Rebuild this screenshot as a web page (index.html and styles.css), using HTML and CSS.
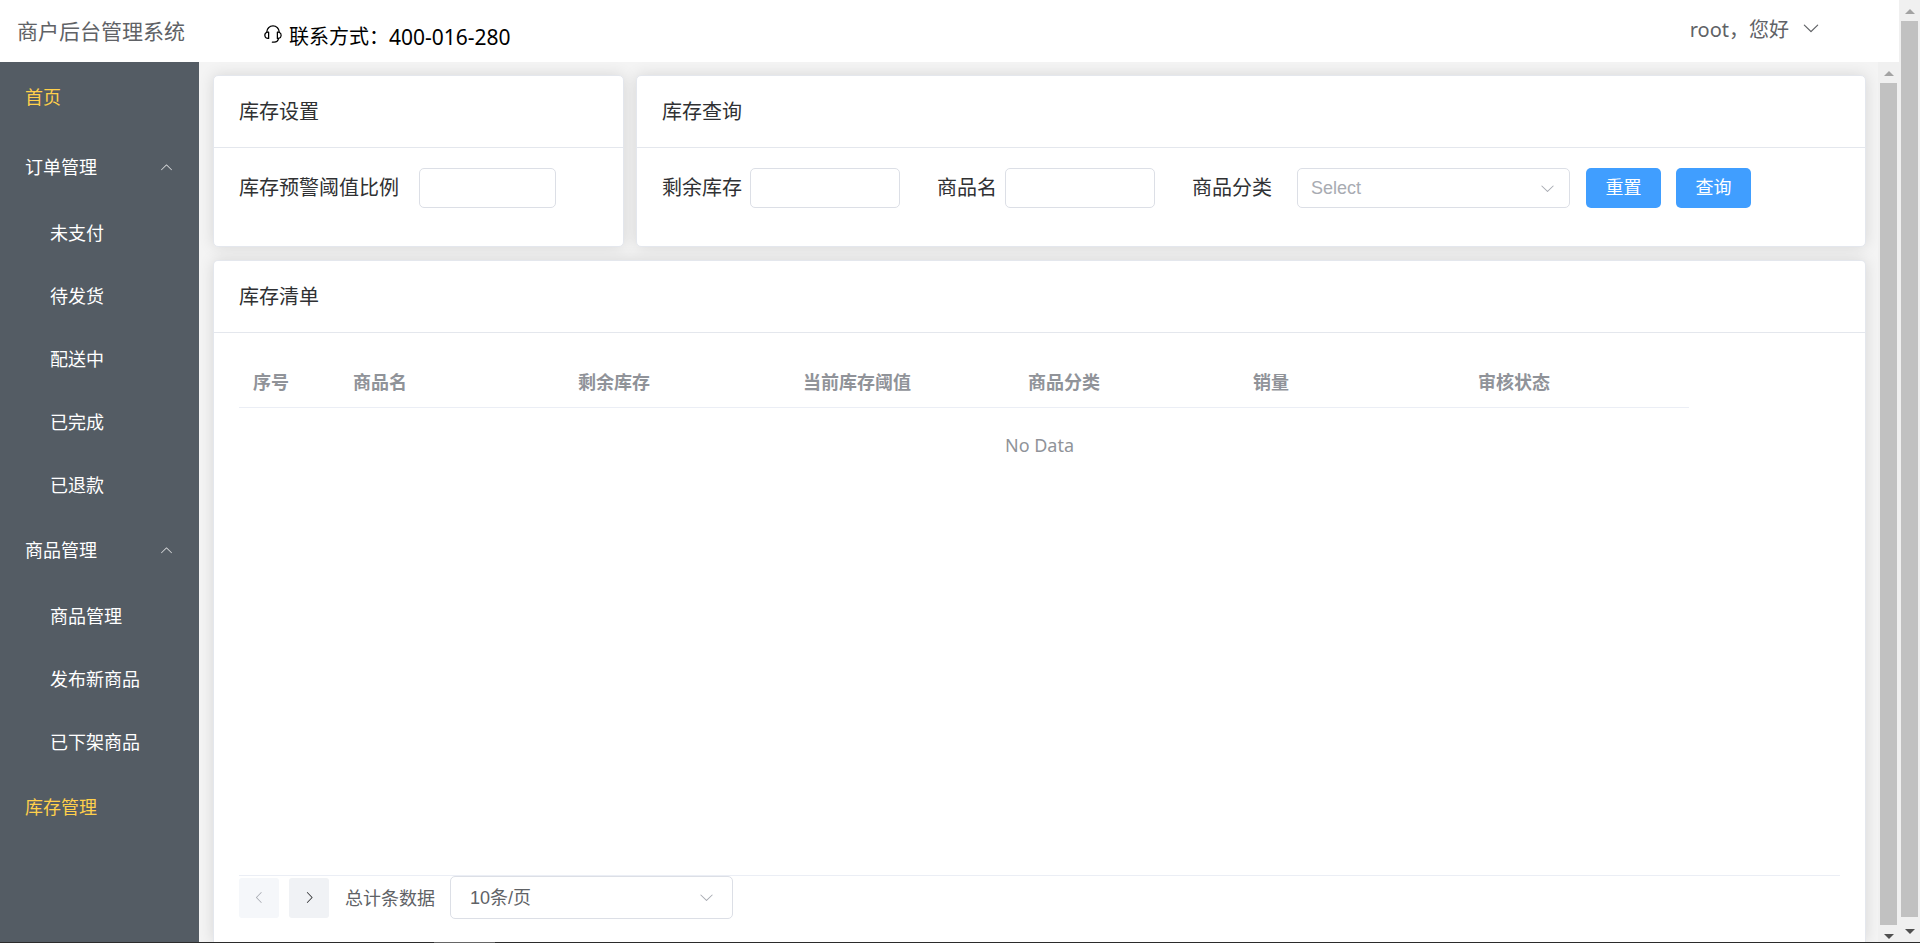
FILE: index.html
```html
<!DOCTYPE html>
<html lang="zh-CN">
<head>
<meta charset="utf-8">
<title>商户后台管理系统</title>
<link rel="stylesheet" href="styles.css">
</head>
<body>
<svg class="sprite" aria-hidden="true">
  <symbol id="arrow-down" viewBox="0 0 1024 1024"><path d="M831.872 340.864 512 652.672 192.128 340.864a30.592 30.592 0 0 0-42.752 0 29.12 29.12 0 0 0 0 41.6L489.664 714.24a32 32 0 0 0 44.672 0l340.288-331.712a29.12 29.12 0 0 0 0-41.728 30.592 30.592 0 0 0-42.752 0z"/></symbol>
  <symbol id="arrow-up" viewBox="0 0 1024 1024"><path d="M831.872 683.136 512 371.328 192.128 683.136a30.592 30.592 0 0 1-42.752 0 29.12 29.12 0 0 1 0-41.6L489.664 309.76a32 32 0 0 1 44.672 0l340.288 331.712a29.12 29.12 0 0 1 0 41.728 30.592 30.592 0 0 1-42.752 0z"/></symbol>
  <symbol id="arrow-left" viewBox="0 0 1024 1024"><path d="M609.408 149.376 277.76 489.6a32 32 0 0 0 0 44.672l331.648 340.352a29.12 29.12 0 0 0 41.728 0 30.592 30.592 0 0 0 0-42.752L339.264 511.936l311.872-319.872a30.592 30.592 0 0 0 0-42.688 29.12 29.12 0 0 0-41.728 0z"/></symbol>
  <symbol id="arrow-right" viewBox="0 0 1024 1024"><path d="M340.864 149.312a30.592 30.592 0 0 0 0 42.752L652.736 512 340.864 831.872a30.592 30.592 0 0 0 0 42.752 29.12 29.12 0 0 0 41.728 0L714.24 534.336a32 32 0 0 0 0-44.672L382.592 149.376a29.12 29.12 0 0 0-41.728 0z"/></symbol>
  <symbol id="service" viewBox="0 0 1024 1024"><path d="M864 409.6a192 192 0 0 1-37.888 349.44A256.064 256.064 0 0 1 576 960h-96a32 32 0 1 1 0-64h96a192.064 192.064 0 0 0 181.12-128H736a32 32 0 0 1-32-32V416a32 32 0 0 1 32-32h32c10.368 0 20.544.832 30.528 2.432a288 288 0 0 0-573.056 0A193.235 193.235 0 0 1 256 384h32a32 32 0 0 1 32 32v320a32 32 0 0 1-32 32h-32a192 192 0 0 1-96-358.4 352 352 0 0 1 704 0zM256 448a128 128 0 1 0 0 256V448zm640 128a128 128 0 0 0-128-128v256a128 128 0 0 0 128-128z"/></symbol>
</svg>
<div class="window">
  <div class="app">
    <header class="topbar">
      <h1 class="brand">商户后台管理系统</h1>
      <p class="contact"><svg class="contact-icon"><use href="#service"/></svg><span>联系方式：</span><span class="phone">400-016-280</span></p>
      <button class="user" type="button"><span>root，您好</span><svg class="user-arrow"><use href="#arrow-down"/></svg></button>
    </header>
    <div class="body">
      <nav class="sidebar">
        <a class="item active" href="#">首页</a>
        <button class="item" type="button">订单管理<svg class="item-arrow"><use href="#arrow-up"/></svg></button>
        <div class="group">
          <a class="sub" href="#">未支付</a>
          <a class="sub" href="#">待发货</a>
          <a class="sub" href="#">配送中</a>
          <a class="sub" href="#">已完成</a>
          <a class="sub" href="#">已退款</a>
        </div>
        <button class="item" type="button">商品管理<svg class="item-arrow"><use href="#arrow-up"/></svg></button>
        <div class="group">
          <a class="sub" href="#">商品管理</a>
          <a class="sub" href="#">发布新商品</a>
          <a class="sub" href="#">已下架商品</a>
        </div>
        <a class="item active" href="#">库存管理</a>
      </nav>
      <main class="content">
        <div class="cards">
          <section class="card">
            <h2 class="card-head">库存设置</h2>
            <div class="card-body">
              <label class="label" for="ratio">库存预警阈值比例</label>
              <input class="box ratio" id="ratio" type="text">
            </div>
          </section>
          <section class="card">
            <h2 class="card-head">库存查询</h2>
            <form class="card-body">
              <label class="label" for="stock">剩余库存</label>
              <input class="box query" id="stock" type="text">
              <label class="label" for="name">商品名</label>
              <input class="box query" id="name" type="text">
              <label class="label" for="category">商品分类</label>
              <span class="picker category">
                <select class="box" id="category"><option>Select</option></select>
                <svg class="picker-arrow"><use href="#arrow-down"/></svg>
              </span>
              <button class="primary" type="button">重置</button>
              <button class="primary" type="button">查询</button>
            </form>
          </section>
        </div>
        <section class="card list">
          <h2 class="card-head">库存清单</h2>
          <div class="list-body">
            <div class="table-area">
              <table class="table">
                <thead>
                  <tr><th class="index">序号</th><th>商品名</th><th>剩余库存</th><th>当前库存阈值</th><th>商品分类</th><th>销量</th><th>审核状态</th></tr>
                </thead>
              </table>
              <p class="empty">No Data</p>
            </div>
            <div class="pager">
              <button class="page-btn" type="button" aria-label="上一页" disabled><svg class="page-arrow"><use href="#arrow-left"/></svg></button>
              <button class="page-btn" type="button" aria-label="下一页"><svg class="page-arrow"><use href="#arrow-right"/></svg></button>
              <label class="total" for="size">总计条数据</label>
              <span class="picker size">
                <select class="box" id="size"><option>10条/页</option></select>
                <svg class="picker-arrow"><use href="#arrow-down"/></svg>
              </span>
            </div>
          </div>
        </section>
      </main>
      <div class="scrollbar" aria-hidden="true"><span class="up"></span><span class="thumb"></span><span class="down"></span></div>
    </div>
  </div>
  <div class="scrollbar outer" aria-hidden="true"><span class="up"></span><span class="thumb"></span><span class="down"></span></div>
</div>
<footer class="edge"><span class="edge-mark"></span></footer>
</body>
</html>
```
FILE: styles.css
```css
* { box-sizing: border-box; }

body {
  margin: 0;
  height: 100vh;
  display: flex;
  flex-direction: column;
  overflow: hidden;
  background: #fff;
  color: #303133;
  font: 20px/28px "Noto Sans", "Noto Sans CJK SC", sans-serif;
}

h1, h2, p { margin: 0; font-weight: 400; }
a { text-decoration: none; }
button { border: 0; padding: 0; background: none; font: inherit; cursor: pointer; }
svg { display: block; fill: currentColor; flex: none; }
.sprite { display: none; }

.window { flex: 1; min-height: 0; display: flex; }
.app { flex: 1; min-width: 0; display: flex; flex-direction: column; }

/* Top bar */
.topbar {
  height: 62px;
  flex: none;
  display: flex;
  align-items: center;
  padding: 0 78px 0 17px;
}
.brand { font-size: 21px; color: #606266; }
.contact {
  display: flex;
  align-items: center;
  margin-left: 78px;
  padding-top: 12px;
  color: #000;
}
.contact-icon { width: 20px; height: 20px; margin: 0 6px 6px 0; }
.phone { font-size: 21px; }
.user {
  display: flex;
  align-items: center;
  gap: 12px;
  margin-left: auto;
  padding-bottom: 2px;
  color: #606266;
}
.user-arrow { width: 20px; height: 20px; margin-bottom: 4px; }

.body { flex: 1; min-height: 0; display: flex; }

/* Side menu */
.sidebar {
  width: 199px;
  flex: none;
  display: flex;
  flex-direction: column;
  background: #545c64;
  font-size: 18px;
}
.item {
  height: 70px;
  flex: none;
  display: flex;
  align-items: center;
  justify-content: space-between;
  padding: 0 25px;
  color: #fff;
}
.item.active { color: #ffd04b; }
.item-arrow { width: 15px; height: 15px; color: #d4d6d8; }
.group { display: flex; flex-direction: column; gap: 1px; margin-bottom: -1px; }
.sub { padding-left: 50px; line-height: 62px; color: #fff; }

/* Cards */
.content {
  flex: 1;
  min-width: 0;
  display: flex;
  flex-direction: column;
  gap: 13px;
  padding: 13px 12px 0 14px;
  overflow: hidden;
  background: #f4f4f4;
}
.cards { display: grid; grid-template-columns: 411fr 1230fr; gap: 12px; }
.card {
  border: 1px solid #e4e7ed;
  border-radius: 5px;
  background: #fff;
  box-shadow: 0 0 15px rgba(0, 0, 0, 0.12);
}
.card-head {
  padding: 22px 25px 21px;
  border-bottom: 1px solid #e4e7ed;
  font-size: 20px;
}
.card-body {
  display: flex;
  align-items: center;
  padding: 20px 25px 38px;
}
.label { white-space: nowrap; }
.box {
  width: 100%;
  height: 40px;
  margin: 0;
  padding: 0 13px;
  border: 1px solid #dcdfe6;
  border-radius: 5px;
  background: #fff;
  color: #606266;
  font: 18px "Liberation Sans", "Noto Sans CJK SC", sans-serif;
  appearance: none;
}
.ratio { width: 137px; margin-left: 20px; }
.query { width: 150px; margin: 0 37px 0 8px; }
.picker { position: relative; flex: none; }
.picker .box { display: block; }
.picker-arrow {
  position: absolute;
  top: 12px;
  right: 14px;
  width: 17px;
  height: 17px;
  color: #a8abb2;
  pointer-events: none;
}
.category { width: 273px; margin: 0 16px 0 25px; }
.category .box { color: #a8abb2; }
.primary {
  width: 75px;
  height: 40px;
  padding-bottom: 3px;
  border-radius: 5px;
  background: #409eff;
  color: #fff;
  font-size: 18px;
}
.primary + .primary { margin-left: 15px; }

/* Stock list */
.list { flex: 1 0 auto; border-bottom: 0; border-radius: 5px 5px 0 0; }
.list-body { padding: 19px 25px 0; font-size: 18px; }
.table-area { min-height: 524px; border-bottom: 1px solid #ebeef5; }
.table {
  width: 1450px;
  max-width: 100%;
  table-layout: fixed;
  border-collapse: collapse;
  color: #909399;
}
.table th {
  height: 55px;
  padding: 6px 14px 0;
  border-bottom: 1px solid #ebeef5;
  text-align: left;
  font-weight: 700;
}
.table .index { width: 100px; }
.empty { padding-top: 23px; text-align: center; color: #909399; }

.pager { display: flex; align-items: center; color: #606266; }
.page-btn {
  width: 40px;
  height: 40px;
  display: grid;
  place-items: center;
  margin-right: 10px;
  border-radius: 3px;
  background: #f0f2f5;
  color: #303133;
}
.page-btn:disabled { background: #f5f7fa; color: #a8abb2; }
.page-arrow { width: 15px; height: 15px; }
.total { margin: 0 15px 0 6px; }
.size { width: 283px; }
.size .box { height: 43px; padding-left: 19px; }
.size .picker-arrow { top: 13px; right: 18px; }

/* Scroll bars */
.scrollbar {
  width: 21px;
  flex: none;
  display: flex;
  flex-direction: column;
  align-items: center;
  gap: 7px;
  padding: 9px 0 3px;
  background: #f0f0f0;
}
.scrollbar.outer { padding-bottom: 8px; }
.thumb { flex: 1; width: 17px; background: #c1c1c1; }
.up, .down { border: solid transparent; border-width: 0 5px; }
.up { border-bottom: 5px solid #a3a3a3; }
.down { border-top: 5px solid #505050; margin-top: 2px; }
.outer .down { margin-top: 5px; }

.edge { height: 1px; flex: none; background: #2b2b2b; }
.edge-mark { display: block; width: 61px; height: 1px; margin-left: 434px; background: #666; }
```
